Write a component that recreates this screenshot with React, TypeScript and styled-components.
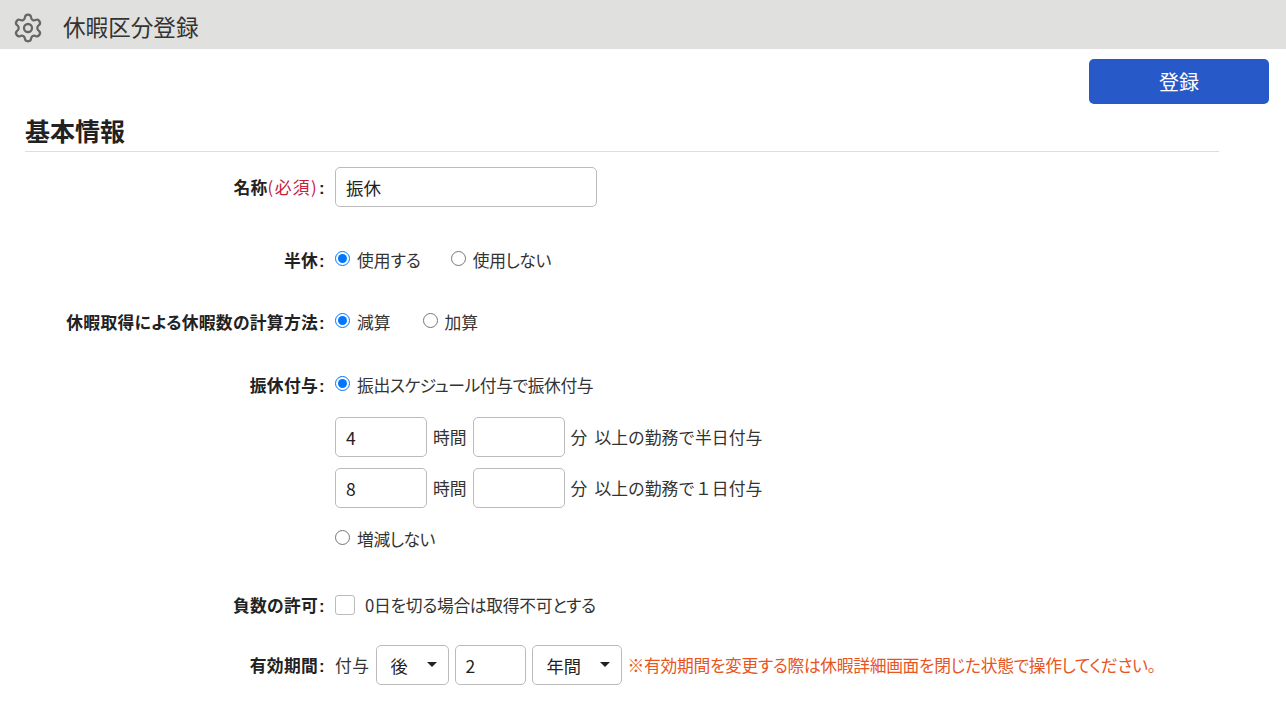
import React from "react";
import styled, { createGlobalStyle } from "styled-components";
import { Settings } from "lucide-react";

const Global = createGlobalStyle`
  html, body { margin: 0; padding: 0; background: #fff; overflow: hidden; }
  body {
    font-family: "Noto Sans CJK JP", "Liberation Sans", sans-serif;
    font-size: 16.8px;
    font-feature-settings: "palt";
    color: #333;
  }
  input, select, button { font-family: inherit; font-feature-settings: "palt"; }
`;

const Page = styled.div`
  width: 1286px;
  height: 703px;
  overflow: hidden;
`;
const Header = styled.header`
  box-sizing: border-box;
  height: 49px;
  background: #e0e0de;
  display: flex;
  align-items: center;
  padding: 6px 0 0 12px;
  gap: 19px;
  color: #666;
`;
const HeaderTitle = styled.h1`
  margin: 0;
  font-size: 22.6px;
  font-weight: 400;
  color: #333;
  line-height: 1;
`;
const Actions = styled.div`
  display: flex;
  justify-content: flex-end;
  padding: 10px 17px 0 0;
`;
const SubmitButton = styled.button`
  width: 180px;
  height: 45px;
  border: 0;
  border-radius: 5px;
  background: #275ac8;
  color: #fff;
  font-size: 20px;
  padding: 0;
`;
const SectionTitle = styled.h2`
  margin: 10px 67px 15px 25px;
  height: 37px;
  border-bottom: 1px solid #ddd;
  font-size: 25px;
  font-weight: 700;
  line-height: 33px;
  color: #222;
`;
const Row = styled.div<{ $top: number; $height: number }>`
  display: grid;
  grid-template-columns: 325px 1fr;
  column-gap: 10px;
  align-items: center;
  margin-top: ${(p) => p.$top}px;
  min-height: ${(p) => p.$height}px;
`;
const Label = styled.div`
  text-align: right;
  font-weight: 700;
  color: #222;
  line-height: 24px;
  letter-spacing: 0.3px;
  white-space: nowrap;
  padding-top: 2px;
`;
const Required = styled.span`
  font-weight: 400;
  color: #c4213f;
  letter-spacing: 1.4px;
`;
const Colon = styled.span`
  margin-left: 1px;
  font-family: "Liberation Sans", sans-serif;
`;
const Controls = styled.div`
  display: flex;
  align-items: center;
  gap: 6px;
  line-height: 24px;
  white-space: nowrap;
`;
const RadioGroup = styled.div<{ $gap: number }>`
  display: flex;
  align-items: center;
  gap: ${(p) => p.$gap}px;
`;
const RadioLabel = styled.label<{ $top?: number; $tight?: number }>`
  display: flex;
  align-items: center;
  gap: 7px;
  line-height: 24px;
  letter-spacing: ${(p) => p.$tight ?? 0}px;
  margin-top: ${(p) => p.$top ?? 0}px;
`;
const RadioInput = styled.input.attrs({ type: "radio" })`
  width: 15px;
  height: 15px;
  margin: -3px 0 0;
  accent-color: #0075ff;
`;
const TextInput = styled.input<{ $width: number }>`
  box-sizing: border-box;
  width: ${(p) => p.$width}px;
  height: 40px;
  border: 1px solid #bbb;
  border-radius: 5px;
  padding: 0 10px;
  font-size: 17.5px;
  color: #222;
  background: #fff;
  outline: none;
`;
const Stack = styled.div`
  display: flex;
  flex-direction: column;
`;
const DurationRow = styled(Controls)<{ $top: number }>`
  margin-top: ${(p) => p.$top}px;
`;
const Suffix = styled.span`
  display: inline-flex;
  gap: 7px;
  font-feature-settings: normal;
`;
const CheckBox = styled.span`
  box-sizing: border-box;
  display: inline-block;
  width: 20px;
  height: 20px;
  border: 1px solid #bbb;
  border-radius: 3px;
  background: #fff;
  margin-right: 4px;
`;
const CheckText = styled.span`
  letter-spacing: -0.3px;
`;
const Prefix = styled.span`
  letter-spacing: 0.5px;
`;
const SelectWrap = styled.span<{ $width: number }>`
  position: relative;
  display: inline-block;
  width: ${(p) => p.$width}px;
  height: 40px;
  &::after {
    content: "";
    position: absolute;
    right: 12px;
    top: 17px;
    border-left: 5px solid transparent;
    border-right: 5px solid transparent;
    border-top: 5px solid #222;
    pointer-events: none;
  }
`;
const Select = styled.select`
  box-sizing: border-box;
  appearance: none;
  width: 100%;
  height: 100%;
  border: 1px solid #bbb;
  border-radius: 5px;
  background: #fff;
  padding: 0 14px;
  font-size: 17.2px;
  color: #222;
  outline: none;
`;
const Warning = styled.span`
  color: #e8551f;
  letter-spacing: -0.33px;
`;

const Duration = ({ top, hours, text }: { top: number; hours: string; text: string }) => (
  <DurationRow $top={top}>
    <TextInput $width={92} defaultValue={hours} />
    <span>時間</span>
    <TextInput $width={92} />
    <Suffix>
      <span>分</span>
      <span>{text}</span>
    </Suffix>
  </DurationRow>
);

export default function App() {
  return (
    <Page>
      <Global />
      <Header>
        <Settings size={32} strokeWidth={1.7} />
        <HeaderTitle>休暇区分登録</HeaderTitle>
      </Header>
      <Actions>
        <SubmitButton>登録</SubmitButton>
      </Actions>
      <SectionTitle>基本情報</SectionTitle>
      <Row $top={0} $height={40}>
        <Label>
          名称<Required>(必須)</Required>
          <Colon>:</Colon>
        </Label>
        <Controls>
          <TextInput $width={262} defaultValue="振休" />
        </Controls>
      </Row>
      <Row $top={39} $height={24}>
        <Label>
          半休<Colon>:</Colon>
        </Label>
        <RadioGroup $gap={30}>
          <RadioLabel>
            <RadioInput name="half" defaultChecked />
            使用する
          </RadioLabel>
          <RadioLabel $tight={-0.4}>
            <RadioInput name="half" />
            使用しない
          </RadioLabel>
        </RadioGroup>
      </Row>
      <Row $top={34} $height={24}>
        <Label>
          休暇取得による休暇数の計算方法<Colon>:</Colon>
        </Label>
        <RadioGroup $gap={32}>
          <RadioLabel>
            <RadioInput name="calc" defaultChecked />
            減算
          </RadioLabel>
          <RadioLabel>
            <RadioInput name="calc" />
            加算
          </RadioLabel>
        </RadioGroup>
      </Row>
      <Row $top={35} $height={24}>
        <Label>
          振休付与<Colon>:</Colon>
        </Label>
        <RadioLabel $tight={-0.4}>
          <RadioInput name="grant" defaultChecked />
          振出スケジュール付与で振休付与
        </RadioLabel>
      </Row>
      <Row $top={18} $height={0}>
        <span />
        <Stack>
          <Duration top={0} hours="4" text="以上の勤務で半日付与" />
          <Duration top={11} hours="8" text="以上の勤務で１日付与" />
          <RadioLabel $top={19} $tight={-0.4}>
            <RadioInput name="grant" />
            増減しない
          </RadioLabel>
        </Stack>
      </Row>
      <Row $top={40} $height={24}>
        <Label>
          負数の許可<Colon>:</Colon>
        </Label>
        <Controls>
          <CheckBox />
          <CheckText>0日を切る場合は取得不可とする</CheckText>
        </Controls>
      </Row>
      <Row $top={26} $height={40}>
        <Label>
          有効期間<Colon>:</Colon>
        </Label>
        <Controls>
          <Prefix>付与</Prefix>
          <SelectWrap $width={73}>
            <Select defaultValue="後">
              <option>前</option>
              <option>後</option>
            </Select>
          </SelectWrap>
          <TextInput $width={71} defaultValue="2" />
          <SelectWrap $width={90}>
            <Select defaultValue="年間">
              <option>年間</option>
              <option>か月</option>
            </Select>
          </SelectWrap>
          <Warning>※有効期間を変更する際は休暇詳細画面を閉じた状態で操作してください。</Warning>
        </Controls>
      </Row>
    </Page>
  );
}
